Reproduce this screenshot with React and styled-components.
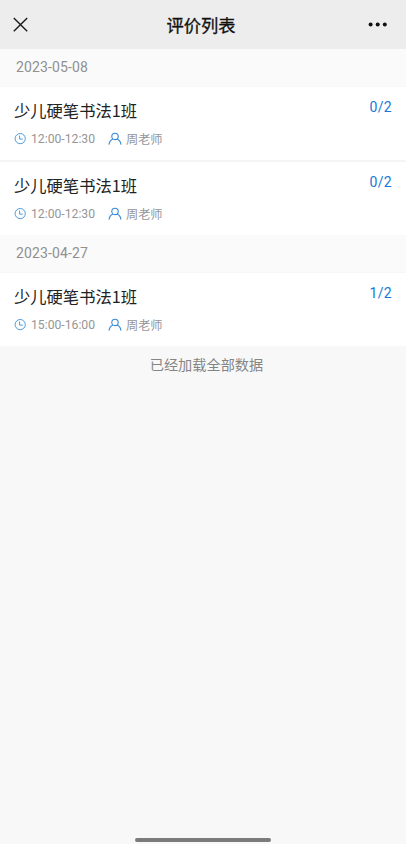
import React from "react";
import styled, { createGlobalStyle } from "styled-components";

const GlobalStyle = createGlobalStyle`
  * { box-sizing: border-box; }
  body {
    margin: 0;
    background: #fff;
    font-family: Roboto, "Noto Sans CJK SC", sans-serif;
  }
`;

const Screen = styled.div`
  width: 406px;
  height: 844px;
  display: flex;
  flex-direction: column;
  background: #f8f8f8;
  overflow: hidden;
`;

const NavBar = styled.header`
  flex: none;
  height: 49px;
  padding: 0 19px 0 13px;
  display: grid;
  grid-template-columns: 56px 1fr 54px;
  align-items: center;
  background: #ededed;
`;

const NavTitle = styled.h1`
  margin: 2px 0 0;
  text-align: center;
  font-size: 17.3px;
  line-height: 24px;
  font-weight: 400;
  -webkit-text-stroke: 0.3px #111;
  color: #111;
`;

const NavButton = styled.button`
  display: flex;
  justify-content: ${(p) => (p.$end ? "flex-end" : "flex-start")};
  padding: 0;
  border: 0;
  background: none;
`;

const DateHeading = styled.h2`
  flex: none;
  margin: 0;
  height: 38px;
  padding: 0 16px;
  font-size: 14px;
  letter-spacing: 0.12px;
  line-height: 37px;
  font-weight: 400;
  color: #909090;
  background: #fafafa;
  border-bottom: 1px solid #f7f7f7;
`;

const Card = styled.article`
  flex: none;
  height: ${(p) => (p.$divided ? 75 : 73)}px;
  padding: 11px 14px 0;
  display: flex;
  justify-content: space-between;
  background: #fff;
  border-bottom: ${(p) => (p.$divided ? "2px solid #f4f4f4" : "0")};
`;

const CourseTitle = styled.h3`
  margin: 0;
  font-family: "Noto Sans CJK SC", sans-serif;
  font-size: 16.3px;
  line-height: 24px;
  font-weight: 400;
  color: #222;
`;

const Meta = styled.div`
  display: flex;
  align-items: center;
  height: 18px;
  margin-top: 8px;
  font-size: 12.2px;
  line-height: 18px;
  color: #969696;

  svg { flex: none; }
`;

const Time = styled.span`
  width: 82px;
  padding-left: 5px;
`;

const Teacher = styled.span`
  padding: 1px 0 0 4px;
`;

const Count = styled.span`
  margin-top: 1px;
  font-size: 14px;
  line-height: 17px;
  letter-spacing: 0.3px;
  color: #1779d4;
`;

const EndNote = styled.p`
  margin: 8px 0 0;
  padding-left: 7px;
  text-align: center;
  font-size: 14.2px;
  line-height: 22px;
  color: #858585;
`;

const HomeBar = styled.div`
  flex: none;
  width: 136px;
  height: 4px;
  margin: auto auto 2px 135px;
  border-radius: 2px;
  background: #7b7b7b;
`;

const ClockIcon = () => (
  <svg width="12" height="12" viewBox="0 0 12 12" fill="none" stroke="#4b9be0">
    <circle cx="6.2" cy="5.6" r="5.1" />
    <path d="M5.6 2.6v3.5h3.2" />
  </svg>
);

const PersonIcon = () => (
  <svg width="14" height="14" viewBox="0 0 14 14" fill="none" stroke="#3589d9" strokeWidth="1.1">
    <circle cx="7" cy="4.4" r="3.2" />
    <path d="M5 7.1C2.7 8.1 1.3 10 1 12.6M9 7.1c2.3 1 3.7 2.9 4 5.5" />
  </svg>
);

const groups = [
  {
    date: "2023-05-08",
    items: [
      { time: "12:00-12:30", count: "0/2" },
      { time: "12:00-12:30", count: "0/2" },
    ],
  },
  { date: "2023-04-27", items: [{ time: "15:00-16:00", count: "1/2" }] },
];

function CourseCard({ time, count, divided }) {
  return (
    <Card $divided={divided}>
      <div>
        <CourseTitle>少儿硬笔书法1班</CourseTitle>
        <Meta>
          <ClockIcon />
          <Time>{time}</Time>
          <PersonIcon />
          <Teacher>周老师</Teacher>
        </Meta>
      </div>
      <Count>{count}</Count>
    </Card>
  );
}

export default function App() {
  return (
    <>
      <GlobalStyle />
      <Screen>
        <NavBar>
          <NavButton aria-label="关闭">
            <svg width="15" height="15" viewBox="0 0 15 15" stroke="#1a1a1a" strokeWidth="1.4">
              <path d="M.8 1 14.2 14.2M14.2 1 .8 14.2" />
            </svg>
          </NavButton>
          <NavTitle>评价列表</NavTitle>
          <NavButton $end aria-label="更多">
            <svg width="19" height="5" viewBox="0 0 19 5" fill="#111">
              <circle cx="2.6" cy="2.5" r="2" />
              <circle cx="9.7" cy="2.5" r="2" />
              <circle cx="16.8" cy="2.5" r="2" />
            </svg>
          </NavButton>
        </NavBar>
        {groups.map((group) => (
          <React.Fragment key={group.date}>
            <DateHeading>{group.date}</DateHeading>
            {group.items.map((item, i) => (
              <CourseCard key={i} {...item} divided={i < group.items.length - 1} />
            ))}
          </React.Fragment>
        ))}
        <EndNote>已经加载全部数据</EndNote>
        <HomeBar />
      </Screen>
    </>
  );
}
